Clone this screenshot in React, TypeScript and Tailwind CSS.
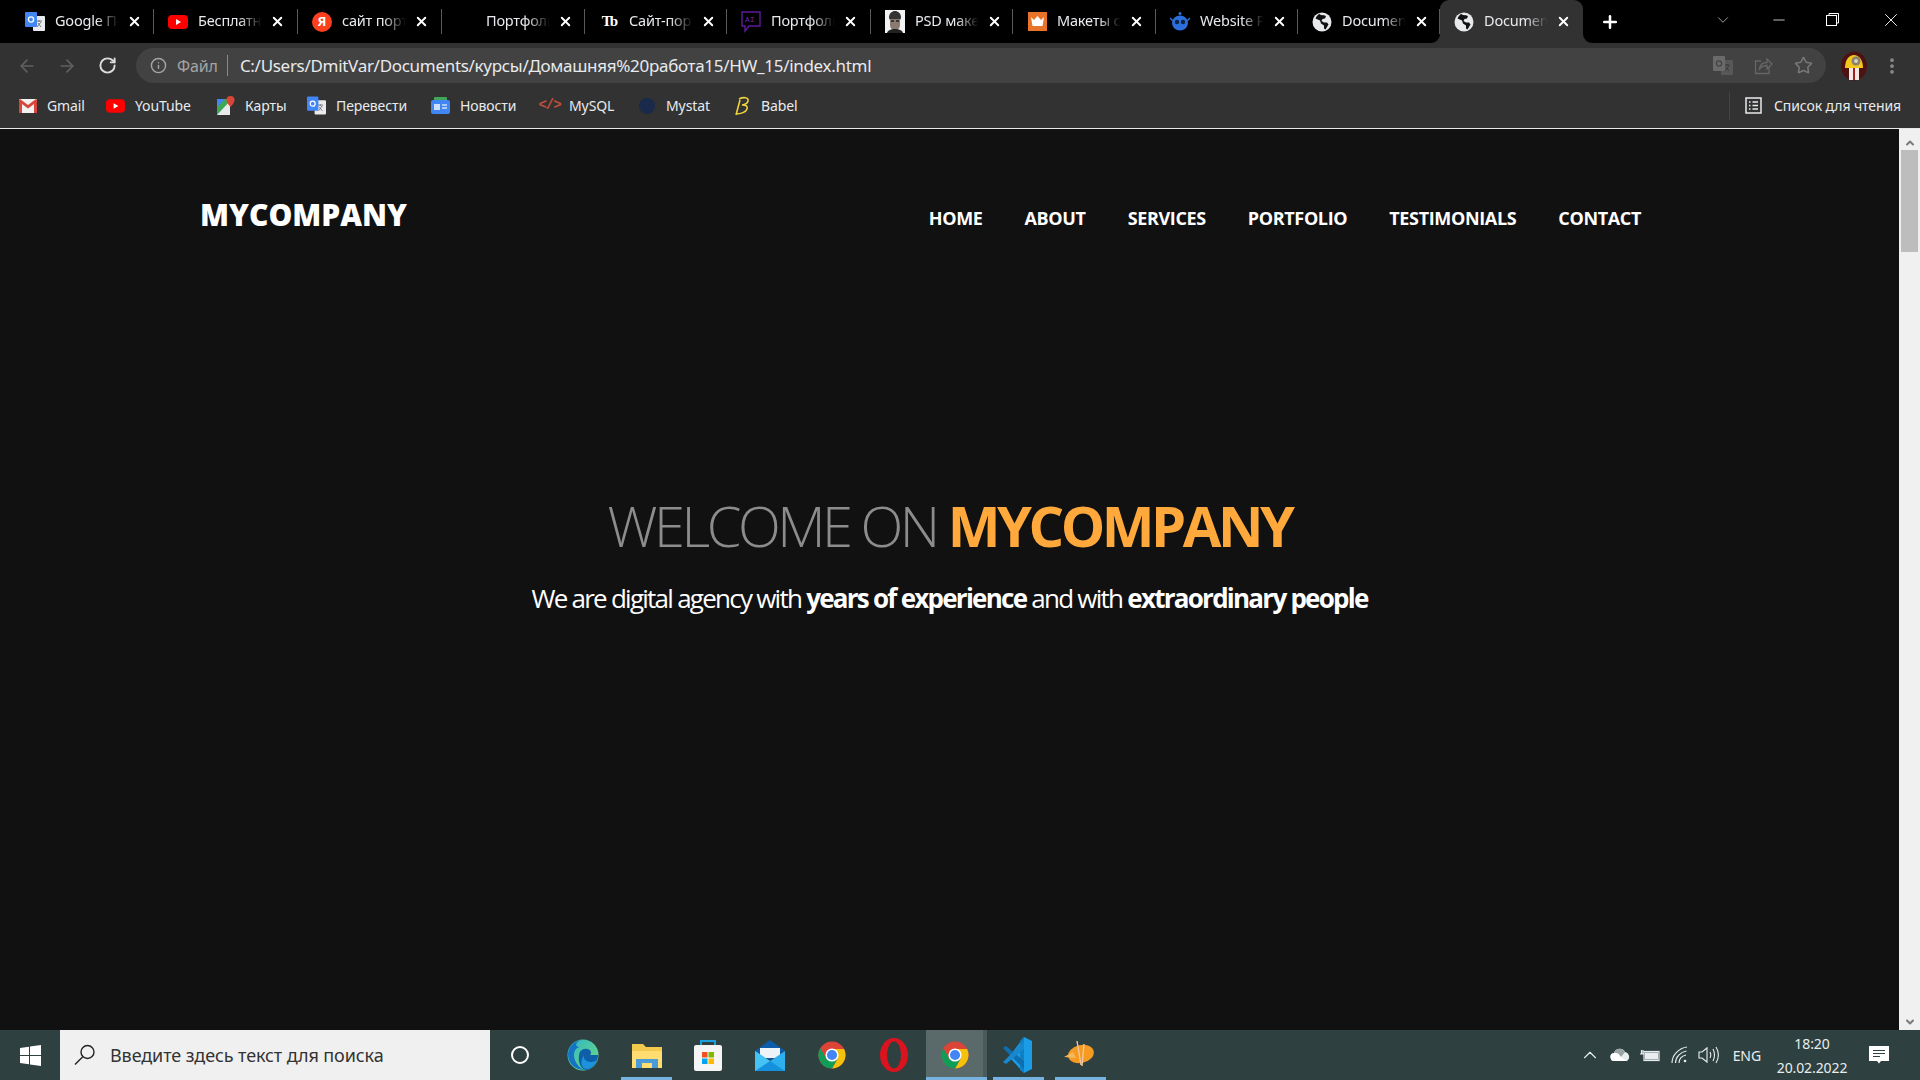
import { ArrowLeft, ArrowRight, ChevronDown, ChevronUp, Info, Minus, MoreVertical, Plus, RotateCw, Star, X } from "lucide-react"
import type { ReactNode } from "react"

const TranslateIcon = () => (
  <svg width="20" height="20" viewBox="0 0 20 20">
    <rect x="8" y="4" width="12" height="15" rx="1" fill="#e8eaed" />
    <path d="M11 9h6M14 8v2M12 15l4-5M13 11l3 4" stroke="#777" strokeWidth="1" fill="none" />
    <rect x="0" y="0" width="12" height="15" rx="1" fill="#4285f4" />
    <circle cx="6" cy="7.5" r="2.6" fill="none" stroke="#fff" strokeWidth="1.3" />
  </svg>
)

const TranslateDimIcon = () => (
  <svg width="20" height="20" viewBox="0 0 20 20">
    <rect x="8" y="4" width="12" height="15" rx="1" fill="#585858" />
    <path d="M11 9h6M14 8v2M12 15l4-5M13 11l3 4" stroke="#3c3c3c" strokeWidth="1" fill="none" />
    <rect x="0" y="0" width="12" height="15" rx="1" fill="#6a6a6a" />
    <circle cx="6" cy="7.5" r="2.6" fill="none" stroke="#444" strokeWidth="1.3" />
  </svg>
)

const YouTubeIcon = () => (
  <svg width="20" height="16" viewBox="0 0 20 16">
    <rect x="0" y="1" width="20" height="14" rx="4" fill="#f00" />
    <path d="M8 5l5 3-5 3z" fill="#fff" />
  </svg>
)

const YandexIcon = () => (
  <span className="flex h-5 w-5 items-center justify-center rounded-full bg-[#fc3f1d] text-[13px] font-bold text-white">Я</span>
)

const AiIcon = () => (
  <svg width="20" height="22" viewBox="0 0 20 22">
    <path d="M1 1h18v14H8l-4 5v-5H1z" fill="none" stroke="#5e1a9c" strokeWidth="1.4" />
    <text x="4" y="11" fontSize="8" fill="#6d22b5" fontFamily="'Liberation Mono', monospace">AI</text>
  </svg>
)

const FaceIcon = () => (
  <svg width="20" height="23" viewBox="0 0 20 23">
    <rect width="20" height="23" fill="#f4f4f4" />
    <path d="M4 8c0-5 3-7 6-7s6 2 6 7l-1 2H5z" fill="#333" />
    <path d="M5 9h10v6c0 3-2 5-5 5s-5-2-5-5z" fill="#8a7a70" />
    <path d="M2 23c1-3 4-4 8-4s7 1 8 4z" fill="#222" />
    <path d="M6 11h3M11 11h3" stroke="#222" strokeWidth="1.4" />
  </svg>
)

const CrownIcon = () => (
  <svg width="19" height="19" viewBox="0 0 19 19">
    <rect width="19" height="19" fill="#e8742a" />
    <path d="M3 5l3 3 3.500-4 3.500 4 3-3-1.500 9h-10z" fill="#fff" />
  </svg>
)

const RobotIcon = () => (
  <svg width="20" height="22" viewBox="0 0 20 22">
    <circle cx="10" cy="2.500" r="1.500" fill="#2a6fdc" />
    <ellipse cx="10" cy="12" rx="8" ry="7.500" fill="#2a6fdc" />
    <path d="M0 7l3 3M20 7l-3 3" stroke="#2a6fdc" strokeWidth="1.500" />
    <circle cx="7" cy="11" r="2.200" fill="#10233f" />
    <circle cx="13" cy="11" r="2.200" fill="#10233f" />
  </svg>
)

const GlobeIcon = () => (
  <svg width="20" height="20" viewBox="0 0 20 20">
    <circle cx="10" cy="10" r="9.500" fill="#e8eaed" />
    <path d="M7 1.500c1 1.500 3 2 4 1.500l3 1-1 2.500-2.500.500-1 2 2.500 1.500h3l1.500 2-3 5-1.500-1v-3l-3-2-1-3-4.500-2c1-2 2-3.500 4-5z" fill="#111" />
  </svg>
)

// the strip in the picture doesn't have even tab widths
const TABS: { title: string; icon: ReactNode; width: string }[] = [
  { title: "Google Переводчик", icon: <TranslateIcon />, width: "w-[143px]" },
  { title: "Бесплатные видео", icon: <YouTubeIcon />, width: "w-[144px]" },
  { title: "сайт портфолио", icon: <YandexIcon />, width: "w-[144px]" },
  { title: "Портфолио", icon: null, width: "w-[143px]" },
  { title: "Сайт-портфолио", icon: <span className="font-['Liberation_Serif',serif] text-[15px] font-bold tracking-[-2px] text-white">Tb</span>, width: "w-[142px]" },
  { title: "Портфолио", icon: <AiIcon />, width: "w-[144px]" },
  { title: "PSD макеты", icon: <FaceIcon />, width: "w-[142px]" },
  { title: "Макеты сайтов", icon: <CrownIcon />, width: "w-[143px]" },
  { title: "Website Pages", icon: <RobotIcon />, width: "w-[142px]" },
  { title: "Document", icon: <GlobeIcon />, width: "w-[142px]" },
]

function Tab({ title, icon, width, active = false }: { title: string; icon: ReactNode; width: string; active?: boolean }) {
  return (
    <div className={`relative flex h-full shrink-0 items-center pl-[14px] ${width} ${active ? "rounded-t-[9px] bg-[#323232]" : ""}`}>
      <span className="flex w-5 shrink-0 justify-center">{icon}</span>
      <span className="ml-[10px] mb-[2px] w-[67px] overflow-hidden whitespace-nowrap text-[14.500px] tracking-[-0.200px] text-[#e8eaed] [mask-image:linear-gradient(to_right,black_62%,transparent_95%)]">
        {title}
      </span>
      <X size={15} strokeWidth={3} className="ml-[5px] shrink-0 text-white" />
      {!active ? <span className="absolute right-0 top-[9px] h-[25px] w-px bg-[#5a5a5a]" /> : null}
      {active ? (
        <>
          <span className="absolute bottom-0 left-[-9px] h-[9px] w-[9px] bg-[#323232]">
            <span className="block h-full w-full rounded-br-[9px] bg-black" />
          </span>
          <span className="absolute bottom-0 right-[-9px] h-[9px] w-[9px] bg-[#323232]">
            <span className="block h-full w-full rounded-bl-[9px] bg-black" />
          </span>
        </>
      ) : null}
    </div>
  )
}

const GmailIcon = () => (
  <svg width="18" height="14" viewBox="0 0 18 14">
    <rect width="18" height="14" rx="1" fill="#f1f1f1" />
    <path d="M0 1v13h3V5l6 4.500L15 5v9h3V1l-1-1-8 6-8-6z" fill="#d9453a" />
  </svg>
)

const MapsIcon = () => (
  <svg width="18" height="20" viewBox="0 0 18 20">
    <path d="M0 3h13v16H0z" fill="#3fa756" />
    <path d="M0 19L13 5v14z" fill="#e8eaed" />
    <path d="M0 3h8L0 11z" fill="#4285f4" />
    <path d="M13.500 0a4 4 0 0 1 4 4c0 3-4 7-4 7s-4-4-4-7a4 4 0 0 1 4-4z" fill="#db4437" />
  </svg>
)

const NewsIcon = () => (
  <svg width="19" height="17" viewBox="0 0 19 17">
    <rect x="3" y="0" width="13" height="6" rx="1" fill="#3fa756" />
    <rect x="0" y="3" width="19" height="14" rx="2" fill="#4285f4" />
    <rect x="3" y="7" width="6" height="6" fill="#cfe0fb" />
    <path d="M11 8h5M11 11h5" stroke="#cfe0fb" strokeWidth="1.500" />
  </svg>
)

const BabelIcon = () => (
  <svg width="18" height="20" viewBox="0 0 18 20">
    <path d="M6 3c4-2 10-2 9 2-.5 2-3 3.500-6 4 4 0 6 1 5 4-1 3-6 5-11 5M7 4L3 19" fill="none" stroke="#f0d33c" strokeWidth="1.600" />
  </svg>
)

function Bookmark({ label, icon, width }: { label: string; icon: ReactNode; width: string }) {
  return (
    <div className={`flex shrink-0 items-center ${width}`}>
      <span className="flex w-[19px] shrink-0 justify-center">{icon}</span>
      <span className="ml-[10px] whitespace-nowrap text-[14px] tracking-[-0.100px] text-[#e8eaed]">{label}</span>
    </div>
  )
}

const NAV_ITEMS = ["HOME", "ABOUT", "SERVICES", "PORTFOLIO", "TESTIMONIALS", "CONTACT"]

const EdgeIcon = () => (
  <svg width="32" height="32" viewBox="0 0 32 32">
    <defs>
      <linearGradient id="edgeA" x1="0" y1="0" x2="1" y2="1">
        <stop offset="0" stopColor="#2fb5c8" />
        <stop offset="1" stopColor="#6fdc7c" />
      </linearGradient>
    </defs>
    <circle cx="16" cy="16" r="15.500" fill="url(#edgeA)" />
    <path d="M1 15C2 6 9 1 16 1c-9 1-8 8-3 7-7 1-8 10-3 17 2 3 6 6 11 6C10 32 1 26 1 15z" fill="#1572c4" />
    <path d="M12 17c0-5 4-8 8-7 4 .5 5 4 3 6h8c0 8-6 15-12 15-6-1-8-9-7-14z" fill="#0f5ea8" />
    <path d="M17 16c-1 4 2 7 7 7 3 0 5-1 6-3-1 6-6 10-10 10-5 0-8-6-3-14z" fill="#1d93dc" />
  </svg>
)

const ExplorerIcon = () => (
  <svg width="30" height="26" viewBox="0 0 30 26">
    <path d="M0 2h11l3 3h16v21H0z" fill="#f2c94c" />
    <path d="M0 9h30v17H0z" fill="#ffdd70" />
    <rect x="4" y="17" width="22" height="9" fill="#4a9bd8" />
    <rect x="10" y="21" width="10" height="5" fill="#ffdd70" />
  </svg>
)

const StoreIcon = () => (
  <svg width="30" height="32" viewBox="0 0 30 32">
    <path d="M8 8V2h14v6" fill="none" stroke="#1ba1e2" strokeWidth="2" />
    <rect x="1" y="6" width="28" height="26" rx="2" fill="#f5f5f5" />
    <rect x="9" y="13" width="5.500" height="5.500" fill="#f25022" />
    <rect x="15.500" y="13" width="5.500" height="5.500" fill="#7fba00" />
    <rect x="9" y="19.500" width="5.500" height="5.500" fill="#00a4ef" />
    <rect x="15.500" y="19.500" width="5.500" height="5.500" fill="#ffb900" />
  </svg>
)

const MailIcon = () => (
  <svg width="30" height="32" viewBox="0 0 30 32">
    <path d="M15 1L0 12l15 9 15-9z" fill="#0b5cab" />
    <path d="M5 9h20v10H5z" fill="#eef3f8" />
    <path d="M0 12v20h30V12L15 22z" fill="#2fb0ee" />
    <path d="M0 32l15-10 15 10z" fill="#1590dd" />
    <path d="M0 12l15 10L0 32z" fill="#45c3f5" />
  </svg>
)

const ChromeIcon = () => (
  <svg width="28" height="32" viewBox="0 0 32 32">
    <circle cx="16" cy="16" r="15.500" fill="#db4437" />
    <path d="M16 9h13.800A15.500 15.500 0 0 1 16 31.500L23 19z" fill="#f4c20d" />
    <path d="M9.500 20L2.600 23.800A15.500 15.500 0 0 0 16 31.500l6-11z" fill="#0f9d58" />
    <path d="M2.600 8.300L9.500 20 2.600 23.800A15.500 15.500 0 0 1 2.600 8.300z" fill="#0f9d58" />
    <circle cx="16" cy="16" r="7.500" fill="#fff" />
    <circle cx="16" cy="16" r="5.800" fill="#4285f4" />
  </svg>
)

const OperaIcon = () => (
  <svg width="28" height="34" viewBox="0 0 28 34">
    <ellipse cx="14" cy="17" rx="14" ry="17" fill="#d9141f" />
    <ellipse cx="14" cy="17" rx="7" ry="13.500" fill="#2f4040" />
  </svg>
)

const VsCodeIcon = () => (
  <svg width="30" height="36" viewBox="0 0 30 36">
    <path d="M22 0l8 4v28l-8 4L7 20z" fill="#1a9ce6" />
    <path d="M22 0v36l-4-3V4z" fill="#0f7fc4" />
    <path d="M1 11l3-2 18 15v8z" fill="#0e6fb0" />
    <path d="M22 4L1 25l3 2 18-15z" fill="#1787cf" />
  </svg>
)

const ZeppelinIcon = () => (
  <svg width="30" height="28" viewBox="0 0 30 28">
    <ellipse cx="17" cy="13" rx="13" ry="9" fill="#f59a23" transform="rotate(-12 17 13)" />
    <path d="M0 16l9-5 3 6z" fill="#f5b85c" />
    <path d="M13 0l4 24M20 3l-2 22" stroke="#f7c9a0" strokeWidth="1.300" fill="none" />
  </svg>
)

function TaskIcon({ children, width, running = false, active = false }: { children: ReactNode; width: string; running?: boolean; active?: boolean }) {
  return (
    <div className={`relative flex h-full shrink-0 items-center justify-center ${width} ${active ? "bg-[#5a6a6a]" : ""}`}>
      {children}
      {running ? <span className="absolute bottom-0 left-0 h-[3px] w-full bg-[#76b3e0]" /> : null}
    </div>
  )
}

export default function App() {
  return (
    <div className="flex h-[1080px] w-[1920px] flex-col overflow-hidden bg-[#111] font-['Noto_Sans','Open_Sans',sans-serif]">
      <div className="flex h-[43px] shrink-0 items-stretch bg-black pl-[11px]">
        {TABS.map((t, i) => (
          <Tab key={i} title={t.title} icon={t.icon} width={t.width} />
        ))}
        <Tab title="Document" icon={<GlobeIcon />} width="w-[143px]" active />
        <div className="ml-[17px] flex items-center">
          <Plus size={20} strokeWidth={3} className="text-white" />
        </div>
        <div className="ml-auto flex items-center pb-[4px]">
          <ChevronDown size={18} strokeWidth={1} className="mr-[38px] text-[#ccc]" />
          <Minus size={18} strokeWidth={1} className="mr-[38px] text-white" />
          <svg width="13" height="13" viewBox="0 0 13 13" fill="none" stroke="#fff" strokeWidth="1" className="mr-[41px]">
            <rect x="0.500" y="2.500" width="10" height="10" />
            <path d="M3 2.500V0.500h9.500V10h-2" />
          </svg>
          <X size={22} strokeWidth={1} className="mr-[18px] text-white" />
        </div>
      </div>

      <div className="flex h-[45px] shrink-0 items-center bg-[#323232] pl-[17px] pr-[18px]">
        <ArrowLeft size={20} strokeWidth={2} className="text-[#5f6060]" />
        <ArrowRight size={20} strokeWidth={2} className="ml-[20px] text-[#5f6060]" />
        <RotateCw size={19} strokeWidth={2.400} className="ml-[21px] text-[#dcdcdc]" />
        <div className="ml-[19px] flex h-[35px] flex-1 items-center rounded-full bg-[#424242] pl-[14px] pr-[13px]">
          <Info size={17} strokeWidth={2} className="text-[#a5a5a5]" />
          <span className="ml-[10px] text-[16px] tracking-[-0.100px] text-[#a5a5a5]">Файл</span>
          <span className="ml-[9px] h-[21px] w-px bg-[#8a8a8a]" />
          <span className="ml-[12px] text-[17px] tracking-[-0.300px] text-[#e8eaed]">C:/Users/DmitVar/Documents/курсы/Домашняя%20работа15/HW_15/index.html</span>
          <span className="ml-auto flex items-center gap-[21px]">
            <TranslateDimIcon />
            <svg width="19" height="19" viewBox="0 0 19 19" fill="none" stroke="#666" strokeWidth="1.300">
              <path d="M15 11v6.500H1.500V5H7" />
              <path d="M5.500 13c.5-4 3.500-6.500 7.500-6.500V3l5 5-5 5V9.500c-3 0-5.500 1-7.500 3.500z" />
            </svg>
            <Star size={19} strokeWidth={2} className="text-[#777]" />
          </span>
        </div>
        <svg width="26" height="30" viewBox="0 0 26 30" className="ml-[15px]">
          <ellipse cx="13" cy="15" rx="13" ry="14.500" fill="#4e1212" />
          <path d="M4 17c0-8 4-13 9-13s9 5 9 13z" fill="#f3c81d" />
          <circle cx="15" cy="10" r="4.500" fill="#8a8170" />
          <circle cx="15" cy="10" r="2" fill="#d8d1bd" />
          <path d="M8 17h10v12H8z" fill="#f2e9e4" />
          <path d="M12 17h2v12h-2z" fill="#a32020" />
        </svg>
        <MoreVertical size={20} strokeWidth={2.500} className="ml-[15px] text-[#8a8a8a]" />
      </div>

      <div className="flex h-[40px] shrink-0 items-center bg-[#323232] pb-[5px] pl-[18px]">
        <Bookmark label="Gmail" icon={<GmailIcon />} width="w-[88px]" />
        <Bookmark label="YouTube" icon={<YouTubeIcon />} width="w-[110px]" />
        <Bookmark label="Карты" icon={<MapsIcon />} width="w-[91px]" />
        <Bookmark label="Перевести" icon={<TranslateIcon />} width="w-[124px]" />
        <Bookmark label="Новости" icon={<NewsIcon />} width="w-[109px]" />
        <Bookmark label="MySQL" icon={<span className="font-['Liberation_Mono',monospace] text-[14px] font-bold tracking-[-1px] text-[#c0503c]">&lt;/&gt;</span>} width="w-[97px]" />
        <Bookmark label="Mystat" icon={<span className="h-4 w-4 rounded-full bg-[#1a2a4a]" />} width="w-[95px]" />
        <Bookmark label="Babel" icon={<BabelIcon />} width="w-[70px]" />
        <div className="ml-auto flex h-[28px] items-center border-l border-[#444] pl-[15px] pr-[19px]">
          <svg width="17" height="17" viewBox="0 0 17 17" fill="none" stroke="#e8eaed" strokeWidth="1.500">
            <rect x="1" y="1" width="15" height="15" />
            <path d="M4 5h1.500M7.500 5H13M4 8.500h1.500M7.500 8.500H13M4 12h1.500M7.500 12H13" />
          </svg>
          <span className="ml-3 whitespace-nowrap text-[14px] tracking-[-0.100px] text-[#e8eaed]">Список для чтения</span>
        </div>
      </div>

      <div className="h-px shrink-0 bg-[#e8e8e8]" />

      <div className="flex min-h-0 flex-1">
        <main className="flex min-w-0 flex-1 flex-col font-['Open_Sans',sans-serif]">
          <header className="flex items-start pl-[200px] pr-[258px] pt-[66px]">
            <a className="text-[30px] font-extrabold leading-[40px] text-white">MYCOMPANY</a>
            <nav className="ml-auto flex gap-[42px] pt-[9px]">
              {NAV_ITEMS.map((item) => (
                <a key={item} className="text-[18px] font-bold leading-[28px] tracking-[-0.350px] text-white">
                  {item}
                </a>
              ))}
            </nav>
          </header>
          <section className="mt-[254px] text-center">
            <h1 className="text-[56px] font-light leading-[72px] tracking-[-3.500px] text-[#8c8c8c]">
              WELCOME ON <strong className="font-bold text-[#ffa93c]">MYCOMPANY</strong>
            </h1>
            <p className="mt-[19px] text-[26px] font-normal leading-[36px] tracking-[-1.750px] text-white">
              We are digital agency with <strong className="font-bold">years of experience</strong> and with <strong className="font-bold">extraordinary people</strong>
            </p>
          </section>
        </main>
        <aside className="flex w-[21px] shrink-0 flex-col items-center bg-[#f0f0f0] px-[2px] pt-[8px]">
          <ChevronUp size={12} strokeWidth={4} className="text-[#7a7a7a]" />
          <div className="mt-[1px] h-[102px] w-[17px] bg-[#bdbdbd]" />
          <ChevronDown size={12} strokeWidth={4} className="mt-auto mb-[2px] text-[#7a7a7a]" />
        </aside>
      </div>

      <footer className="flex h-[50px] shrink-0 items-stretch bg-[#2f4040]">
        <div className="flex w-[60px] shrink-0 items-center justify-center">
          <svg width="21" height="21" viewBox="0 0 21 21" fill="#fff">
            <path d="M0 3l9-1.300V10H0zM10 1.500L21 0v10H10zM0 11h9v8.300L0 18zM10 11h11v10l-11-1.500z" />
          </svg>
        </div>
        <div className="flex w-[430px] shrink-0 items-center bg-[#f0f0f0] pl-[14px]">
          <svg width="22" height="22" viewBox="0 0 22 22" fill="none" stroke="#222" strokeWidth="1.400">
            <circle cx="13.500" cy="8" r="6.500" />
            <path d="M8.800 12.700L1 20.500" />
          </svg>
          <span className="ml-[14px] text-[18px] tracking-[-0.100px] text-[#333]">Введите здесь текст для поиска</span>
        </div>
        <TaskIcon width="w-[60px]">
          <span className="h-[18px] w-[18px] rounded-full border-[2.500px] border-white" />
        </TaskIcon>
        <TaskIcon width="w-[66px]"><EdgeIcon /></TaskIcon>
        <div className="w-[5px] shrink-0" />
        <TaskIcon width="w-[51px]" running><ExplorerIcon /></TaskIcon>
        <div className="w-[5px] shrink-0" />
        <TaskIcon width="w-[62px]"><StoreIcon /></TaskIcon>
        <TaskIcon width="w-[62px]"><MailIcon /></TaskIcon>
        <TaskIcon width="w-[62px]"><ChromeIcon /></TaskIcon>
        <TaskIcon width="w-[62px]"><OperaIcon /></TaskIcon>
        <div className="w-px shrink-0" />
        <TaskIcon width="w-[57px]" running active><ChromeIcon /></TaskIcon>
        <div className="relative w-[4px] shrink-0 bg-[#4a5a5a]">
          <span className="absolute bottom-0 left-0 h-[3px] w-full bg-[#76b3e0]" />
        </div>
        <div className="w-[6px] shrink-0" />
        <TaskIcon width="w-[51px]" running><span className="mr-[3px] flex"><VsCodeIcon /></span></TaskIcon>
        <div className="w-[11px] shrink-0" />
        <TaskIcon width="w-[51px]" running><span className="mr-[4px] flex"><ZeppelinIcon /></span></TaskIcon>

        <div className="ml-auto flex items-center pr-[31px] text-[#e8eeee]">
          <ChevronUp size={22} strokeWidth={1.200} />
          <svg width="22" height="14" viewBox="0 0 22 14" className="ml-[9px]">
            <path d="M5 13a4 4 0 0 1-1-8 6 6 0 0 1 11-1 5 5 0 0 1 2 9z" fill="#e8eeee" />
            <path d="M5 13a4 4 0 0 1-1-8c2-1 5 0 7 4l6 4z" fill="#fff" />
            <path d="M4 5a6 6 0 0 1 11-1l-4 5c-2-4-5-5-7-4z" fill="#9aa5a5" />
          </svg>
          <svg width="20" height="14" viewBox="0 0 20 14" className="ml-[8px]" fill="none" stroke="#e8eeee" strokeWidth="1.200">
            <rect x="4" y="3.500" width="15" height="9" />
            <rect x="5.500" y="5" width="12" height="6" fill="#e8eeee" />
            <path d="M0 6h4M1.500 2v4M3 2v4" />
          </svg>
          <svg width="18" height="18" viewBox="0 0 18 18" className="ml-[11px]" fill="none" stroke="#e8eeee" strokeWidth="1.100">
            <path d="M1 17C1 9 8 2 16 1M4.500 17c0-6 5-11 11-12M8 17c0-4 3-7 7-8" />
            <circle cx="14" cy="15" r="1.300" fill="#e8eeee" stroke="none" />
          </svg>
          <svg width="22" height="18" viewBox="0 0 22 18" className="ml-[9px]" fill="none" stroke="#e8eeee" strokeWidth="1.100">
            <path d="M1 6h3l5-4v14l-5-4H1zM12 6c1 2 1 4 0 6M15 3c2 4 2 8 0 12M18 1c3 5 3 11 0 16" />
          </svg>
          <span className="ml-[13px] text-[14px] tracking-[-0.100px]">ENG</span>
          <div className="ml-[16px] flex w-[70px] flex-col items-center pt-[2px] text-[14px] leading-[24px] tracking-[-0.100px]">
            <span>18:20</span>
            <span>20.02.2022</span>
          </div>
          <svg width="20" height="20" viewBox="0 0 20 20" className="ml-[22px]">
            <path d="M0 1h20v15h-8l-2 2.500L8 16H0z" fill="#fff" />
            <path d="M4 5.500h12M4 8.500h12M4 11.500h7" stroke="#2f4040" strokeWidth="1" />
          </svg>
        </div>
      </footer>
    </div>
  )
}
